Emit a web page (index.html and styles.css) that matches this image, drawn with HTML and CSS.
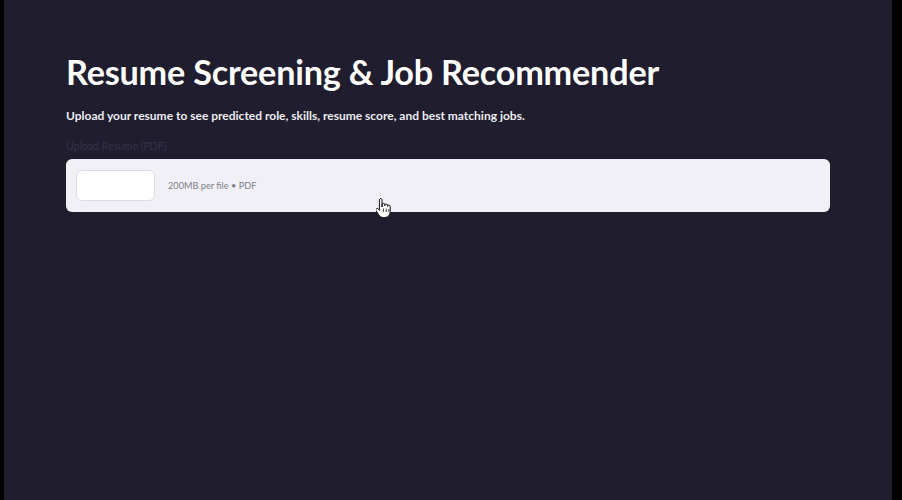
FILE: index.html
```html
<!DOCTYPE html>
<html>
<head>
<meta charset="utf-8">
<link rel="stylesheet" href="styles.css">
</head>
<body>
<div class="frame">
  <main class="app">
    <h1 class="title">Resume Screening &amp; Job Recommender</h1>
    <p class="subtitle">Upload your resume to see predicted role, skills, resume score, and best matching jobs.</p>
    <label class="label">Upload Resume (PDF)</label>
    <div class="dropzone">
      <div class="browse"></div>
      <span class="limits">200MB per file • PDF</span>
    </div>
  </main>
  <svg class="cursor" width="16" height="22" viewBox="0 0 16 22">
    <path d="M4.5 1.5c0.8 0 1.5 0.6 1.5 1.5v7l0-2.2c0-0.8 0.6-1.4 1.4-1.4s1.4 0.6 1.4 1.4v1l0-0.4c0-0.8 0.6-1.4 1.4-1.4s1.4 0.6 1.4 1.4v1c0-0.8 0.6-1.3 1.3-1.3s1.3 0.6 1.3 1.3v5.5c0 3-2 5.6-5.3 5.6h-1.6c-2.2 0-3.4-1-4.6-2.8l-2.6-4c-0.5-0.8-0.3-1.7 0.4-2.1s1.5-0.2 2 0.5l0.9 1.3v-10.4c0-0.9 0.7-1.5 1.5-1.5z" fill="#fff" stroke="#111" stroke-width="1" stroke-linejoin="round"/>
    <path d="M7.4 11.5v3.5M10.2 11.5v3.5M12.9 12v3" stroke="#111" stroke-width="0.8"/>
  </svg>
</div>
</body>
</html>
```
FILE: styles.css
```css
html, body {
  margin: 0;
  padding: 0;
  background: #000;
}
.frame {
  position: relative;
  width: 888px;
  height: 500px;
  margin-left: 4px;
  background: #1f1d2e;
  overflow: hidden;
}
.app {
  padding: 50px 62px 0 62px;
  font-family: "Lato", "Liberation Sans", sans-serif;
}
.title {
  margin: 0;
  color: #ffffff;
  font-size: 34.2px;
  font-weight: 700;
  line-height: 44px;
  letter-spacing: -0.2px;
}
.subtitle {
  margin: 13px 0 0 0;
  color: #ececf2;
  font-size: 12px;
  font-weight: 700;
  line-height: 18px;
}
.label {
  display: block;
  margin-top: 13px;
  color: #34324a;
  font-size: 10.5px;
  line-height: 16px;
}
.dropzone {
  margin-top: 5px;
  width: 764px;
  height: 53px;
  box-sizing: border-box;
  padding: 0 10px;
  background: #f0f0f6;
  border-radius: 6px;
  display: flex;
  align-items: center;
  gap: 13px;
}
.browse {
  width: 79px;
  height: 31px;
  box-sizing: border-box;
  background: #ffffff;
  border: 1px solid #dcdce4;
  border-radius: 6px;
}
.limits {
  color: #808088;
  font-size: 9.2px;
}
.cursor {
  position: absolute;
  left: 372px;
  top: 197px;
}
```
